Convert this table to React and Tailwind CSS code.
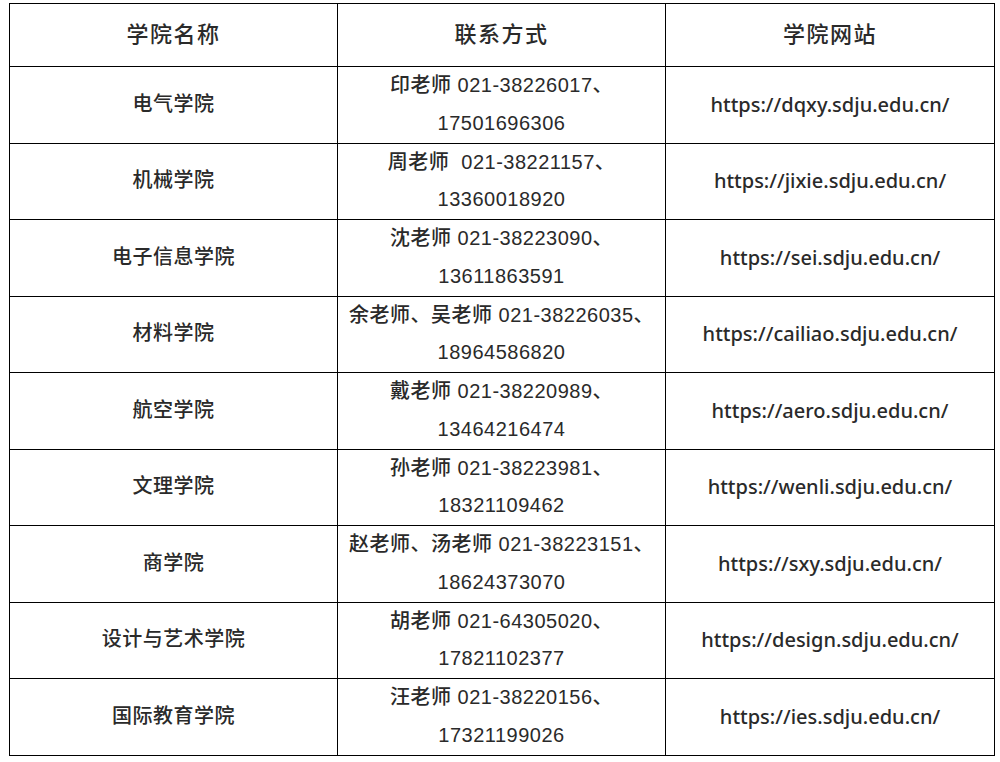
const rows = [
  ["电气学院", "印老师 021-38226017、", "17501696306", "https://dqxy.sdju.edu.cn/"],
  ["机械学院", "周老师  021-38221157、", "13360018920", "https://jixie.sdju.edu.cn/"],
  ["电子信息学院", "沈老师 021-38223090、", "13611863591", "https://sei.sdju.edu.cn/"],
  ["材料学院", "余老师、吴老师 021-38226035、", "18964586820", "https://cailiao.sdju.edu.cn/"],
  ["航空学院", "戴老师 021-38220989、", "13464216474", "https://aero.sdju.edu.cn/"],
  ["文理学院", "孙老师 021-38223981、", "18321109462", "https://wenli.sdju.edu.cn/"],
  ["商学院", "赵老师、汤老师 021-38223151、", "18624373070", "https://sxy.sdju.edu.cn/"],
  ["设计与艺术学院", "胡老师 021-64305020、", "17821102377", "https://design.sdju.edu.cn/"],
  ["国际教育学院", "汪老师 021-38220156、", "17321199026", "https://ies.sdju.edu.cn/"],
];

const font = { fontFamily: '"Liberation Sans", "Noto Sans CJK SC", sans-serif' };

export default function App() {
  return (
    <div className="bg-white w-[1000px] h-[762px] pt-[3px] pl-[9px]" style={font}>
      <table className="border-collapse table-fixed w-[985px] text-[#2a2a2a]">
        <colgroup>
          <col className="w-[328px]" />
          <col className="w-[328px]" />
          <col className="w-[329px]" />
        </colgroup>
        <thead>
          <tr className="h-[63px]">
            {["学院名称", "联系方式", "学院网站"].map((h) => (
              <th key={h} className="border border-black p-0 text-center align-middle font-medium text-[22px] tracking-[1.5px] leading-[30px]">
                {h}
              </th>
            ))}
          </tr>
        </thead>
        <tbody>
          {rows.map((r) => (
            <tr key={r[0]}>
              <td className="border border-black p-0 text-center align-middle font-medium text-[20px] tracking-[0.5px] leading-[37.75px]">
                {r[0]}
              </td>
              <td className="border border-black p-0 text-center align-middle font-medium text-[20px] tracking-[0.5px] leading-[37.75px] whitespace-pre">
                {r[1]}
                <br />
                {r[2]}
              </td>
              <td className="border border-black p-0 text-center align-middle font-medium text-[20px] leading-[37.75px]" style={{ fontFamily: '"Noto Sans", "Liberation Sans", sans-serif' }}>
                {r[3]}
              </td>
            </tr>
          ))}
        </tbody>
      </table>
    </div>
  );
}
